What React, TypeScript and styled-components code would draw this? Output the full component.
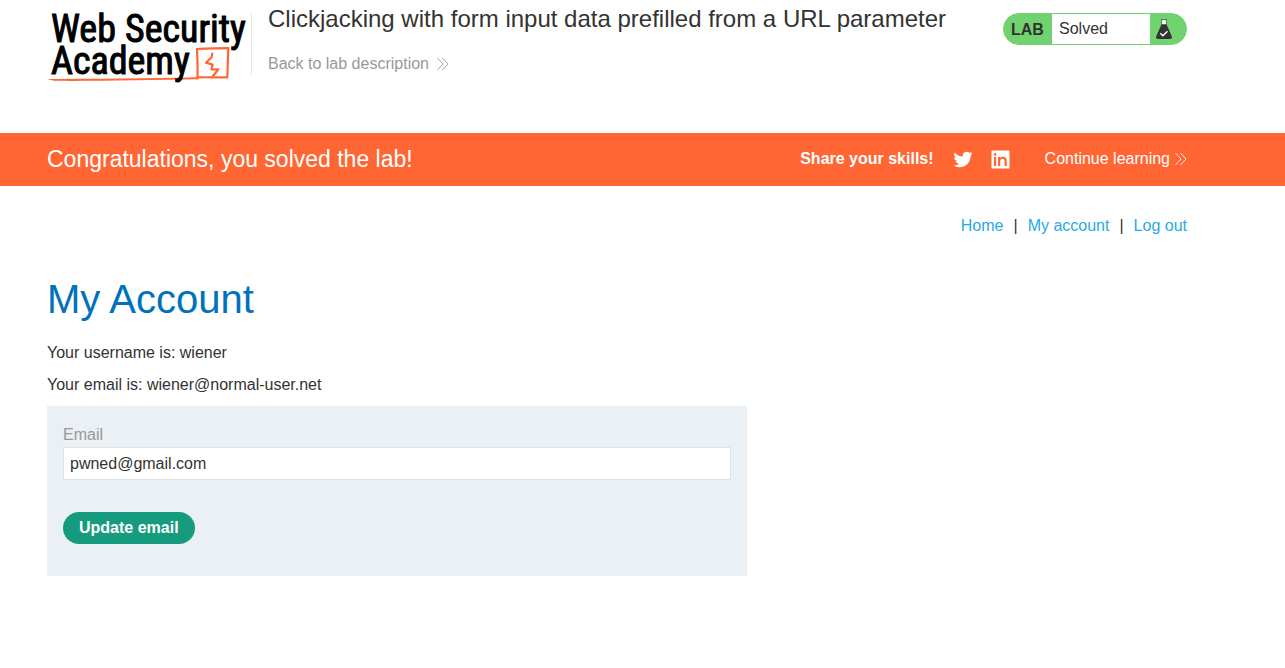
import React from "react";
import styled, { createGlobalStyle } from "styled-components";

const GlobalStyle = createGlobalStyle`
  *, *::before, *::after { box-sizing: border-box; }
  body {
    margin: 0;
    background: #ffffff;
    color: #333332;
    font-family: "Liberation Sans", Arial, sans-serif;
    font-size: 16px;
    line-height: 24px;
  }
`;

const Container = styled.div`
  padding: 0 98px 0 47px;
`;

const Header = styled(Container).attrs({ as: "header" })`
  display: flex;
  align-items: flex-start;
  min-height: 133px;
`;

const LogoLink = styled.a`
  display: block;
  flex: none;
  width: 204px;
  height: 88px;
`;

const Titles = styled.div`
  flex: 1;
  margin-top: 13px;
  height: 62px;
  border-left: 1px solid #e5e5e5;
  padding-left: 16px;
`;

const LabTitle = styled.h2`
  margin: -8px 0 0;
  font-size: 24px;
  font-weight: 400;
  line-height: 28px;
`;

const BackLink = styled.a`
  display: inline-flex;
  align-items: center;
  gap: 8px;
  margin-top: 19px;
  color: #999999;
  text-decoration: none;
`;

const Status = styled.div`
  display: flex;
  flex: none;
  margin-top: 13px;
  width: 184px;
  height: 32px;
  border: 1px solid #70d36f;
  border-radius: 16px;
  background: #70d36f;
  overflow: hidden;
  line-height: 30px;
`;

const StatusLabel = styled.span`
  width: 48px;
  padding-left: 7px;
  padding-top: 1px;
  font-weight: 700;
`;

const StatusText = styled.span`
  flex: 1;
  padding-left: 7px;
  background: #ffffff;
`;

const StatusIcon = styled.span`
  display: flex;
  align-items: center;
  width: 36px;
  padding-left: 6px;
`;

const Banner = styled(Container).attrs({ as: "section" })`
  display: flex;
  align-items: center;
  min-height: 53px;
  padding-bottom: 2px;
  background: #ff6633;
  color: #ffffff;
`;

const BannerTitle = styled.h4`
  flex: 1;
  margin: 0;
  font-size: 23px;
  font-weight: 400;
`;

const ShareLabel = styled.span`
  margin-right: 19px;
  font-weight: 700;
`;

const ShareLink = styled.a`
  display: flex;
  margin-right: 18px;
  padding-top: 2px;
`;

const ContinueLink = styled.a`
  display: flex;
  align-items: center;
  gap: 5px;
  margin-left: 17px;
  color: #ffffff;
  text-decoration: none;
`;

const Nav = styled.nav`
  display: flex;
  justify-content: flex-end;
  gap: 10px;
  padding-top: 28px;
`;

const NavLink = styled.a`
  color: #29abe2;
  text-decoration: none;
`;

const Heading = styled.h1`
  margin: 37px 0 18px;
  color: #0071bc;
  font-size: 40px;
  font-weight: 400;
  line-height: 48px;
`;

const Detail = styled.p`
  margin: 0 0 8px;
`;

const EmailForm = styled.form`
  max-width: 700px;
  margin-top: 9px;
  padding: 17px 16px 32px;
  background: #eaf0f3;
`;

const Label = styled.label`
  display: block;
  color: #999999;
`;

const Input = styled.input`
  display: block;
  width: 100%;
  height: 33px;
  margin-bottom: 32px;
  padding: 0 6px;
  border: 1px solid #dfe4e7;
  border-radius: 0;
  background: #ffffff;
  color: #333332;
  font: inherit;
`;

const Button = styled.button`
  display: block;
  height: 32px;
  padding: 0 16px;
  border: 0;
  border-radius: 16px;
  background: #169b7f;
  color: #ffffff;
  font: inherit;
  font-weight: 700;
  line-height: 32px;
`;

const LogoText = styled.text`
  font-family: "Roboto Condensed", "Liberation Sans Narrow", Roboto, sans-serif;
  font-size: 38px;
  fill: #000000;
  stroke: #000000;
  stroke-width: 1px;
`;

function Logo() {
  return (
    <svg width="204" height="88" viewBox="47 0 204 88" role="img" aria-label="Web Security Academy">
      <LogoText x="51" y="42">Web</LogoText>
      <LogoText x="125" y="42">Security</LogoText>
      <path d="M47 79 C95 78.8 150 78.7 198 77.3 L198 79.3 C150 79.7 95 81.3 54 80.8 Z" fill="#ff6633" />
      <g fill="none" stroke="#ff6633" strokeLinejoin="round" strokeLinecap="round">
        <path d="M197.5 78.5 C197.7 68 197.6 59 197 49 C208 48.5 218 48.2 228.5 48.2 C227.6 58 227.8 68 227.3 77.3 C217 77.6 209 77 199 77.4" strokeWidth="2.2" />
        <path d="M212.3 53.5 L211.6 57.2 L206 62.8 L212.6 64.6 L211.5 69.5 L218.4 69.4 L212.4 76.8" strokeWidth="2.2" />
      </g>
      <LogoText x="51" y="74">Academy</LogoText>
    </svg>
  );
}

function Chevrons() {
  return (
    <svg width="12" height="14" viewBox="0 0 12 14" fill="none" stroke="currentColor" strokeWidth="0.9" aria-hidden="true">
      <path d="M0.5 1 L6 7 L0.5 13 M5.5 1 L11 7 L5.5 13" />
    </svg>
  );
}

function Flask() {
  return (
    <svg width="16" height="22" viewBox="0 0 16 22" aria-hidden="true">
      <rect x="6" y="2" width="4" height="5" fill="#ffffff" />
      <path d="M5 1.5h6M5.7 1.5v5M10.3 1.5v5" stroke="#333332" strokeWidth="0.5" fill="none" />
      <path d="M5.5 6.3h5L15.8 18.5Q16.2 21 14.4 21H1.6Q-0.2 21 0.2 18.5Z" fill="#333332" />
      <path d="M4.3 15.2l2.6 2.6 4.6-4.5" fill="none" stroke="#ffffff" strokeWidth="1.3" />
    </svg>
  );
}

function Twitter() {
  return (
    <svg width="20" height="19" viewBox="0 0 24 24" fill="#ffffff" aria-hidden="true">
      <path d="M23.95 4.57a10 10 0 0 1-2.82.77 4.96 4.96 0 0 0 2.16-2.72c-.95.55-2 .96-3.13 1.18a4.92 4.92 0 0 0-8.38 4.48A13.93 13.93 0 0 1 1.64 3.16a4.92 4.92 0 0 0 1.52 6.57 4.9 4.9 0 0 1-2.23-.61v.06a4.92 4.92 0 0 0 3.95 4.83 4.96 4.96 0 0 1-2.21.08 4.94 4.94 0 0 0 4.6 3.42A9.87 9.87 0 0 1 0 19.54a13.99 13.99 0 0 0 7.56 2.21c9.05 0 14-7.5 14-13.98 0-.21 0-.42-.02-.63a9.94 9.94 0 0 0 2.41-2.57z" />
    </svg>
  );
}

function LinkedIn() {
  return (
    <svg width="19" height="19" viewBox="0 0 19 19" aria-hidden="true">
      <rect x="0.5" y="0.5" width="18" height="18" rx="0.5" fill="#ffffff" />
      <path d="M3 7h2.2v9H3zM7 7h2.2v1.3c.6-1 1.5-1.5 2.8-1.5 2.7 0 3.7 1.6 3.7 4.2v5h-2.2v-4.6c0-1.6-.5-2.7-2-2.7s-2.3 1.1-2.3 2.7V16H7z" fill="#ff6633" />
      <circle cx="4.1" cy="4.4" r="1.3" fill="#ff6633" />
    </svg>
  );
}

export default function App() {
  return (
    <>
      <GlobalStyle />
      <Header>
        <LogoLink href="#"><Logo /></LogoLink>
        <Titles>
          <LabTitle>Clickjacking with form input data prefilled from a URL parameter</LabTitle>
          <BackLink href="#">Back to lab description <Chevrons /></BackLink>
        </Titles>
        <Status>
          <StatusLabel>LAB</StatusLabel>
          <StatusText>Solved</StatusText>
          <StatusIcon><Flask /></StatusIcon>
        </Status>
      </Header>
      <Banner>
        <BannerTitle>Congratulations, you solved the lab!</BannerTitle>
        <ShareLabel>Share your skills!</ShareLabel>
        <ShareLink href="#" aria-label="Share on Twitter"><Twitter /></ShareLink>
        <ShareLink href="#" aria-label="Share on LinkedIn"><LinkedIn /></ShareLink>
        <ContinueLink href="#">Continue learning <Chevrons /></ContinueLink>
      </Banner>
      <Container as="main">
        <Nav>
          <NavLink href="#">Home</NavLink>
          <span>|</span>
          <NavLink href="#">My account</NavLink>
          <span>|</span>
          <NavLink href="#">Log out</NavLink>
        </Nav>
        <Heading>My Account</Heading>
        <Detail>Your username is: wiener</Detail>
        <Detail>Your email is: wiener@normal-user.net</Detail>
        <EmailForm onSubmit={(event) => event.preventDefault()}>
          <Label htmlFor="email">Email</Label>
          <Input id="email" type="email" name="email" defaultValue="pwned@gmail.com" />
          <Button type="submit">Update email</Button>
        </EmailForm>
      </Container>
    </>
  );
}
